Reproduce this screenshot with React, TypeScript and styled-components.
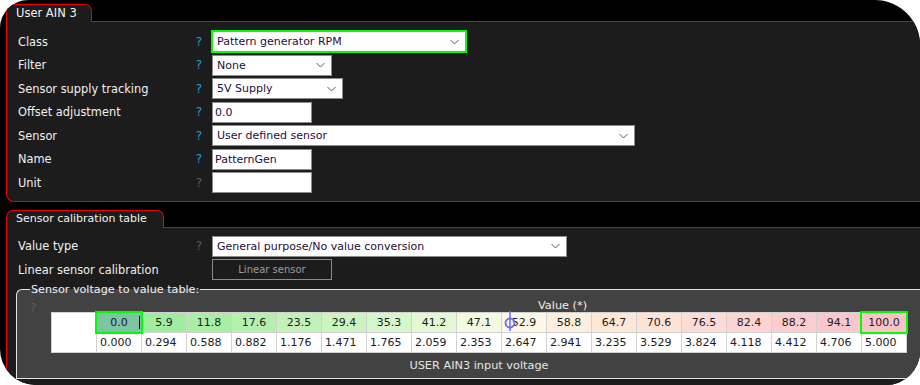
import React from "react";
import styled, { createGlobalStyle } from "styled-components";

const RED = "#ee0000";
const GREEN = "#00ff00";

const GlobalStyle = createGlobalStyle`
  html, body {
    margin: 0;
    background: #fff;
  }
  body {
    font-family: "DejaVu Sans", Verdana, sans-serif;
  }
`;

const Window = styled.div`
  width: 920px;
  height: 385px;
  box-sizing: border-box;
  padding-top: 4px;
  overflow: hidden;
  background: #000;
  border-radius: 28px 45px 34px 36px;
`;

const Section = styled.section`
  margin-left: 6px;
  & + & {
    margin-top: 8px;
  }
`;

const Tab = styled.div<{ $w: number; $size: number }>`
  position: relative;
  z-index: 1;
  box-sizing: border-box;
  width: ${(p) => p.$w}px;
  height: 18px;
  margin-bottom: -1px;
  padding-left: 9px;
  border: 1px solid ${RED};
  border-bottom: none;
  border-radius: 7px 7px 0 0;
  background: #1c1c1c;
  color: #f2f2f2;
  font-size: ${(p) => p.$size}px;
  line-height: 16px;
  white-space: nowrap;
`;

const Panel = styled.div<{ $pad: string }>`
  margin-right: -40px;
  padding: ${(p) => p.$pad};
  background: #1c1c1c;
  border: 1px solid ${RED};
  border-right: none;
  border-radius: 0 0 0 8px;
`;

const FormGrid = styled.div`
  display: grid;
  grid-template-columns: 173px 16px 1fr;
  grid-auto-rows: 23.5px;
  align-items: center;
  padding-left: 11px;
`;

const Label = styled.span`
  color: #f0f0f0;
  font-size: 11.4px;
  white-space: nowrap;
`;

const Help = styled.span<{ $muted?: boolean }>`
  color: ${(p) => (p.$muted ? "#5c5c5c" : "#1aa0d8")};
  font-size: 12px;
  text-align: center;
`;

const Control = styled.div<{ $w: number; $active?: boolean; $select?: boolean }>`
  display: flex;
  align-items: center;
  justify-content: space-between;
  box-sizing: border-box;
  width: ${(p) => p.$w}px;
  height: ${(p) => (p.$active ? 23 : 21)}px;
  margin-left: ${(p) => (p.$active ? 4 : 5)}px;
  padding: 0 6px 0 ${(p) => (p.$select ? 4 : 2)}px;
  border: ${(p) => (p.$active ? `2px solid ${GREEN}` : "1px solid #8c8c8c")};
  background: #fff;
  color: #2a0c3c;
  font-size: 11px;
  white-space: nowrap;
`;

const LinearButton = styled.div`
  display: flex;
  align-items: center;
  justify-content: center;
  box-sizing: border-box;
  width: 120px;
  height: 21px;
  margin-left: 5px;
  border: 1px solid #8a8a8a;
  background: #1c1c1c;
  color: #9c9c9c;
  font-size: 10px;
`;

const Chevron = () => (
  <svg width="9" height="6" viewBox="0 0 9 6">
    <polyline points="0.5,1 4.5,5 8.5,1" fill="none" stroke="#5a5a5a" strokeWidth="1" />
  </svg>
);

const Fieldset = styled.fieldset`
  margin: 1px 0 0 9px;
  padding: 0;
  border: 1px solid #e4e4e4;
  border-right: none;
  border-radius: 6px 0 0 0;
  background: #424242;
`;

const Legend = styled.legend`
  margin-left: 13px;
  padding: 0 1px;
  color: #f2f2f2;
  font-size: 11.2px;
  line-height: 14px;
`;

const HeadRow = styled.div`
  display: grid;
  grid-template-columns: 34px 856px;
  height: 15px;
  align-items: center;
`;

const HeadHelp = styled.span`
  padding-left: 13px;
  padding-top: 4px;
  color: #5c5c5c;
  font-size: 12px;
`;

const HeadTitle = styled.span`
  padding-left: 487px;
  color: #ececec;
  font-size: 11.3px;
`;

const Table = styled.div`
  display: grid;
  grid-template-columns: repeat(19, 44px);
  grid-template-rows: 19px 19px;
  gap: 1px;
  width: fit-content;
  margin-left: 34px;
  border: 1px solid #d2d2d2;
  background: #d2d2d2;
`;

const Blank = styled.div`
  grid-row: span 2;
  background: #fff;
`;

const Cell = styled.div<{ $bg: string; $left?: boolean; $selected?: boolean }>`
  position: relative;
  z-index: ${(p) => (p.$selected ? 1 : 0)};
  display: flex;
  align-items: center;
  justify-content: ${(p) => (p.$left ? "flex-start" : "center")};
  padding-left: ${(p) => (p.$left ? 3 : 0)}px;
  background: ${(p) => p.$bg};
  color: #1c1c28;
  font-size: 11px;
  outline: ${(p) => (p.$selected ? `2px solid ${GREEN}` : "none")};
`;

const Caret = styled.span`
  position: absolute;
  right: 1px;
  top: 3px;
  width: 1px;
  height: 13px;
  background: #000;
`;

const Crosshair = styled.svg`
  position: absolute;
  left: 2px;
  top: -2px;
`;

const Footer = styled.div`
  width: 856px;
  height: 25px;
  margin-left: 34px;
  color: #e6e6e6;
  font-size: 11.3px;
  line-height: 25px;
  text-align: center;
`;

const values = [
  "0.0", "5.9", "11.8", "17.6", "23.5", "29.4", "35.3", "41.2", "47.1",
  "52.9", "58.8", "64.7", "70.6", "76.5", "82.4", "88.2", "94.1", "100.0",
];

const volts = [
  "0.000", "0.294", "0.588", "0.882", "1.176", "1.471", "1.765", "2.059", "2.353",
  "2.647", "2.941", "3.235", "3.529", "3.824", "4.118", "4.412", "4.706", "5.000",
];

const shades = [
  "#7cc4a4", "#a0eda0", "#aaeea6", "#b6f0ae", "#c2f2b8", "#ccf4c1", "#d8f6cb", "#e4f8d5", "#f3fadf",
  "#fcf8e7", "#fdefdd", "#fde7d7", "#fde2d6", "#fcdcd5", "#fcd4d2", "#fccdcf", "#fcc7cc", "#fcc2c9",
];

type Row = {
  label: string;
  muted?: boolean;
  w: number;
  value: string;
  select?: boolean;
  active?: boolean;
};

const mainRows: Row[] = [
  { label: "Class", w: 256, value: "Pattern generator RPM", select: true, active: true },
  { label: "Filter", w: 120, value: "None", select: true },
  { label: "Sensor supply tracking", w: 131, value: "5V Supply", select: true },
  { label: "Offset adjustment", w: 100, value: "0.0" },
  { label: "Sensor", w: 423, value: "User defined sensor", select: true },
  { label: "Name", w: 100, value: "PatternGen" },
  { label: "Unit", muted: true, w: 100, value: "" },
];

const renderRow = (r: Row) => (
  <React.Fragment key={r.label}>
    <Label>{r.label}</Label>
    <Help $muted={r.muted}>?</Help>
    <Control $w={r.w} $active={r.active} $select={r.select}>
      <span>{r.value}</span>
      {r.select && <Chevron />}
    </Control>
  </React.Fragment>
);

const App = (): JSX.Element => {
  return (
    <>
      <GlobalStyle />
      <Window>
        <Section>
          <Tab $w={86} $size={11.5}>
            User AIN 3
          </Tab>
          <Panel $pad="8px 0 6px 0">
            <FormGrid>{mainRows.map(renderRow)}</FormGrid>
          </Panel>
        </Section>

        <Section>
          <Tab $w={158} $size={11}>
            Sensor calibration table
          </Tab>
          <Panel $pad="7px 0 20px 0">
            <FormGrid>
              {renderRow({
                label: "Value type",
                muted: true,
                w: 355,
                value: "General purpose/No value conversion",
                select: true,
              })}
              <Label>Linear sensor calibration</Label>
              <span />
              <LinearButton>Linear sensor</LinearButton>
            </FormGrid>

            <Fieldset>
              <Legend>Sensor voltage to value table:</Legend>
              <HeadRow>
                <HeadHelp>?</HeadHelp>
                <HeadTitle>Value (*)</HeadTitle>
              </HeadRow>
              <Table>
                <Blank />
                {values.map((v, i) => (
                  <Cell
                    key={"v" + i}
                    $bg={shades[i]}
                    $selected={i === 0 || i === values.length - 1}
                  >
                    {v}
                    {i === 0 && <Caret />}
                    {i === 9 && (
                      <Crosshair width="14" height="22" viewBox="0 0 14 22">
                        <line x1="6" y1="0" x2="6" y2="20" stroke="#6b6bff" strokeWidth="1.5" />
                        <circle cx="6" cy="12" r="4.5" fill="none" stroke="#6b6bff" strokeWidth="1.8" />
                      </Crosshair>
                    )}
                  </Cell>
                ))}
                {volts.map((v, i) => (
                  <Cell key={"u" + i} $bg="#fff" $left>
                    {v}
                  </Cell>
                ))}
              </Table>
              <Footer>USER AIN3 input voltage</Footer>
            </Fieldset>
          </Panel>
        </Section>
      </Window>
    </>
  );
};

export default App;
